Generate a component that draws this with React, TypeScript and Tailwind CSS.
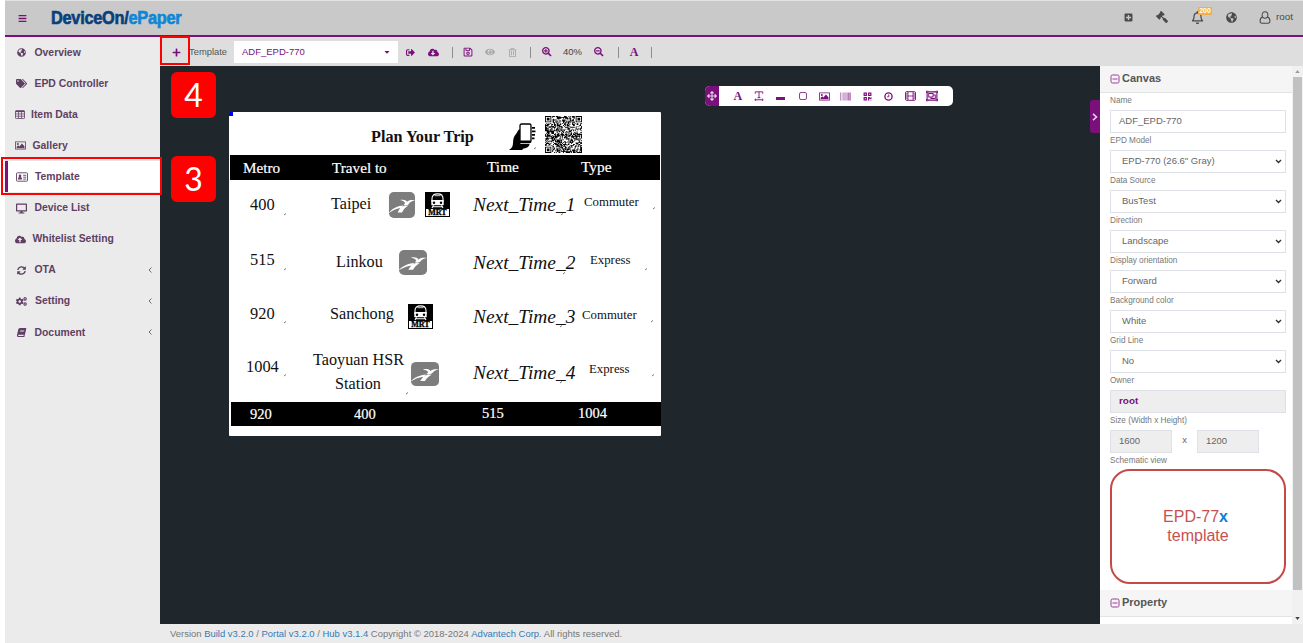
import React from "react";
import {
  FaBars, FaTags, FaDesktop, FaCloudUploadAlt, FaCogs, FaBook, FaSignOutAlt,
  FaCloudDownloadAlt, FaRegSave, FaEye, FaRegTrashAlt, FaSearchPlus, FaSearchMinus,
  FaPlus, FaPlusSquare, FaGavel, FaRegBell, FaGlobeAmericas, FaCaretDown,
  FaArrowsAlt, FaBarcode, FaQrcode, FaRegObjectGroup, FaSyncAlt,
} from "react-icons/fa";

function Picture({ className }: { className?: string }) {
  return (
    <svg viewBox="0 0 12 10" className={className} fill="currentColor">
      <path fillRule="evenodd" d="M0 .5h12v9H0zM.9 1.4v7.2h10.2V1.4z" />
      <circle cx="3" cy="3.3" r="1.1" />
      <path d="M1.7 8V6.400l1.800-1.600 1.200 1.200L7.600 2.700l2.800 3v2.300z" />
    </svg>
  );
}

function Table() {
  return (
    <svg viewBox="0 0 11 10" className="w-[10px] h-[9px]" fill="none" stroke="currentColor">
      <rect x=".5" y=".8" width="10" height="8.700" rx=".8" strokeWidth=".9" />
      <path d="M.5 1.500h10" strokeWidth="1.600" />
      <path d="M.5 4.400h10M.5 6.900h10M3.900 1.500v8M7.200 1.500v8" strokeWidth=".8" />
    </svg>
  );
}

function IdCard() {
  return (
    <svg viewBox="0 0 12 10" className="w-[12px] h-[10px]" fill="none" stroke="currentColor">
      <rect x=".5" y=".8" width="11" height="8.400" rx=".8" strokeWidth=".9" />
      <circle cx="4" cy="3.900" r="1.300" fill="currentColor" stroke="none" />
      <path d="M1.900 7.600c0-1.700.7-2.500 2.100-2.500s2.100.8 2.100 2.500z" fill="currentColor" stroke="none" />
      <path d="M7.200 3.300h3M7.200 5.200h3M7.200 7.100h3" strokeWidth=".9" />
    </svg>
  );
}

function LetterA({ className }: { className: string }) {
  return <span className={`font-['Liberation_Serif',serif] font-bold leading-none ${className}`}>A</span>;
}

function TextTool() {
  return (
    <svg viewBox="0 0 12 12" className="w-[10px] h-[10px]" fill="none" stroke="currentColor">
      <path d="M1.5 3.2V1h9v2.2M6 1v7M4.3 8h3.4M1 10.5h10M2.3 9.3 1 10.5l1.3 1.2M9.7 9.3l1.3 1.2-1.3 1.2" strokeWidth="1.1" />
    </svg>
  );
}

function Clock() {
  return (
    <svg viewBox="0 0 10 10" className="size-[9px]" fill="none" stroke="currentColor">
      <circle cx="5" cy="5" r="4" strokeWidth="1.500" />
      <path d="M5.300 2.700v2.600H3.500" strokeWidth="1" />
    </svg>
  );
}

function Film() {
  return (
    <svg viewBox="0 0 12 11" className="w-[11px] h-[10px]" fill="none" stroke="currentColor">
      <rect x=".6" y=".8" width="10.8" height="9.4" rx=".8" strokeWidth="1.1" />
      <path d="M3.2 1v9M8.8 1v9M3.2 5.5h5.6M.8 3.2h2.4M.8 5.5h2.4M.8 7.8h2.4M8.8 3.2h2.4M8.8 5.5h2.4M8.8 7.8h2.4" strokeWidth=".9" />
    </svg>
  );
}

function Person() {
  return (
    <svg viewBox="0 0 12 14" className="h-[13px] w-[12px]" fill="none" stroke="currentColor" strokeWidth="1.100">
      <ellipse cx="6" cy="4.300" rx="3.100" ry="3.500" />
      <path d="M3.400 6.400C1.500 7 .7 8.700.7 10.700c0 1.500.7 2.400 2 2.400h6.600c1.300 0 2-.9 2-2.400 0-2-.8-3.700-2.700-4.300" />
    </svg>
  );
}

const nav = [
  { label: "Overview", icon: <FaGlobeAmericas className="size-[9px]" />, pad: "pl-[12px] gap-[8.5px]" },
  { label: "EPD Controller", icon: <FaTags className="size-[11px]" />, pad: "pl-[11px] gap-[7.5px]" },
  { label: "Item Data", icon: <Table />, pad: "pl-[10px] gap-[6px]" },
  { label: "Gallery", icon: <Picture className="w-[11px] h-[9px]" />, pad: "pl-[10px] gap-[6.5px]" },
  { label: "Template", icon: <IdCard />, pad: "pl-[8px] gap-[7px]", active: true },
  { label: "Device List", icon: <FaDesktop className="size-[11px]" />, pad: "pl-[11px] gap-[7.5px]" },
  { label: "Whitelist Setting", icon: <FaCloudUploadAlt className="size-[11px]" />, pad: "pl-[10px] gap-[6.5px]" },
  { label: "OTA", icon: <FaSyncAlt className="size-[9px]" />, pad: "pl-[12px] gap-[8.5px]", more: true },
  { label: "Setting", icon: <FaCogs className="size-[11px]" />, pad: "pl-[11px] gap-[8px]", more: true },
  { label: "Document", icon: <FaBook className="size-[9px] -skew-x-12" />, pad: "pl-[12px] gap-[8.5px]", more: true },
];

function Sidebar() {
  return (
    <nav className="w-[155px] shrink-0 bg-[#ebebeb] text-[#5f3f63]">
      {nav.map((n) => (
        <div
          key={n.label}
          className={`flex h-[31.1px] items-center text-[10.4px] font-bold ${n.pad} ${n.active ? "bg-white border-l-[3px] border-[#7b0f7b]" : ""}`}
        >
          {n.icon}
          <span className="whitespace-nowrap">{n.label}</span>
          {n.more && (
            <svg viewBox="0 0 4 6" className="ml-auto mr-[8px] w-[4px] h-[6px]" fill="none" stroke="currentColor" strokeWidth=".8">
              <path d="M3.5.5 1 3l2.5 2.5" />
            </svg>
          )}
        </div>
      ))}
    </nav>
  );
}

function Header() {
  return (
    <header className="flex h-[37px] items-center bg-[#c9c9c9] border-t border-t-[#e2e2e2] border-b-2 border-b-[#7b0f7b] text-[#4a4a4a]">
      <FaBars className="ml-[12.5px] size-[9px] shrink-0 text-[#7b0f7b]" />
      <div className="ml-[24px] w-[135px] pt-[1px]">
        <span className="inline-block origin-left scale-x-[0.935] whitespace-nowrap text-[17.5px] leading-[20px] font-bold tracking-[-0.3px] text-[#08407c] [-webkit-text-stroke:0.6px]">
          DeviceOn/<span className="text-[#0f86d6]">ePaper</span>
        </span>
      </div>
      <div className="ml-auto flex items-center pb-[1px]">
        <FaPlusSquare className="size-[9px] mr-[23px]" />
        <FaGavel className="size-[12px] mr-[23px] -scale-x-100" />
        <div className="relative mr-[22px]">
          <FaRegBell className="size-[13px]" />
          <span className="absolute left-[7px] -top-[4px] h-[8px] w-[14px] rounded-[1px] bg-[#f0ad4e] text-center text-[7px] leading-[8px] font-bold text-white">200</span>
        </div>
        <FaGlobeAmericas className="size-[11px] mr-[22px]" />
        <Person />
        <span className="ml-[5px] mr-[10px] text-[9.9px]">root</span>
      </div>
    </header>
  );
}

function Bar() {
  return <span className="h-[11px] w-px bg-[#8d8d8d]" />;
}

function Cell({ w, children }: { w: string; children: React.ReactNode }) {
  return <span className={`flex shrink-0 items-center justify-center ${w}`}>{children}</span>;
}

function Toolbar() {
  return (
    <div className="flex h-[29px] shrink-0 items-center border-t border-[#ebe0eb] bg-[#dedede] text-[#7b0f7b]">
      <Cell w="w-[32px]"><FaPlus className="size-[9px]" /></Cell>
      <span className="-ml-[3px] w-[42px] text-[9.4px] text-[#555]">Template</span>
      <div className="ml-[3px] flex h-[22px] w-[164px] items-center justify-between bg-white pl-[8px] pr-[7px] text-[9.5px]">
        ADF_EPD-770
        <FaCaretDown className="size-[8px]" />
      </div>
      <span className="w-px" />
      <Cell w="w-[22px]"><FaSignOutAlt className="size-[9px]" /></Cell>
      <Cell w="w-[24px]"><FaCloudDownloadAlt className="size-[11px]" /></Cell>
      <Cell w="w-[14px]"><Bar /></Cell>
      <Cell w="w-[18px]"><FaRegSave className="size-[10px]" /></Cell>
      <Cell w="w-[26px]"><FaEye className="size-[10px] text-[#a5a5a5]" /></Cell>
      <Cell w="w-[18px]"><FaRegTrashAlt className="size-[9px] text-[#a5a5a5]" /></Cell>
      <Cell w="w-[18px]"><Bar /></Cell>
      <Cell w="w-[16px]"><FaSearchPlus className="size-[9.5px]" /></Cell>
      <Cell w="w-[35px]"><span className="text-[9.5px] text-[#444]">40%</span></Cell>
      <Cell w="w-[18px]"><FaSearchMinus className="size-[9.5px]" /></Cell>
      <Cell w="w-[20px]"><Bar /></Cell>
      <Cell w="w-[12px]"><LetterA className="text-[12px]" /></Cell>
      <Cell w="w-[22px]"><Bar /></Cell>
    </div>
  );
}

const paletteIcons = [
  <LetterA className="text-[12px]" />,
  <TextTool />,
  <span className="mt-[4px] h-[3px] w-[9px] bg-current" />,
  <span className="size-[8px] rounded-[2px] border border-current opacity-80" />,
  <Picture className="w-[11px] h-[9px]" />,
  <FaBarcode className="size-[11px] opacity-80" />,
  <FaQrcode className="size-[9px]" />,
  <Clock />,
  <Film />,
  <FaRegObjectGroup className="size-[12px]" />,
];

function Palette() {
  return (
    <div className="absolute left-[545px] top-[20px] flex h-[20px] w-[248px] overflow-hidden rounded-[5px] bg-white text-[#7b0f7b]">
      <span className="flex w-[14px] items-center justify-center bg-[#7b0f7b] text-[#e6cfe6]">
        <FaArrowsAlt className="size-[10px]" />
      </span>
      <div className="ml-[8px] flex items-center">
        {paletteIcons.map((icon, i) => (
          <Cell key={i} w="w-[21.6px]">{icon}</Cell>
        ))}
      </div>
    </div>
  );
}

const qrSize = 41;
function qrPath() {
  let seed = 77;
  let d = "";
  const inFinder = (x: number, y: number) =>
    (x < 8 && y < 8) || (x > qrSize - 9 && y < 8) || (x < 8 && y > qrSize - 9);
  for (let y = 0; y < qrSize; y++) {
    for (let x = 0; x < qrSize; x++) {
      seed = (seed * 1103515245 + 12345) % 2147483648;
      if (!inFinder(x, y) && seed / 2147483648 > 0.46) d += `M${x} ${y}h1v1h-1z`;
    }
  }
  for (const [x, y] of [[0, 0], [qrSize - 7, 0], [0, qrSize - 7]]) {
    d += `M${x} ${y}h7v7h-7zM${x + 1} ${y + 1}v5h5v-5zM${x + 2} ${y + 2}h3v3h-3z`;
  }
  return d;
}

function Rail({ className }: { className: string }) {
  return (
    <svg viewBox="0 0 28 26" preserveAspectRatio="none" className={`absolute ${className}`}>
      <rect x="1" width="27" height="26" rx="5" fill="#7d7d7d" />
      <path d="M0 21.5C4 17 9 14 16 13.500L13 16C8 16.500 4 19 0 21.500zM10 20.500c1.500-3.500 4-6 7.500-7l3.500.3c-3 1.700-5 3.700-6.500 6.700z" fill="#fff" />
      <path d="M12.500 8c3.500-.8 6-.3 7.300 1.800C21.500 8 24 7.600 28 8.200c-3.500.8-5.200 1.800-6.200 3.500-1.200 1.700-3.800 1.900-6 .9 1.200-.5 1.700-.9 1.900-1.400C17 9.500 15.500 8.500 12.500 8z" fill="#fff" />
    </svg>
  );
}

function Mrt({ className }: { className: string }) {
  return (
    <div className={`absolute flex h-[25px] w-[25px] flex-col bg-black p-px ${className}`}>
      <svg viewBox="0 0 23 16" className="h-[16px] w-[23px]">
        <path d="M6 8.500V5.500C6 2.200 8.200.9 11.500.9S17 2.200 17 5.500v3z" fill="none" stroke="#fff" strokeWidth="1.100" />
        <path d="M5.300 7h12.400v5.200H5.300z" fill="#fff" />
        <path d="M7.500 12.200 6 15M15.500 12.200 17 15M7 13.700h9" stroke="#fff" strokeWidth="1.100" />
        <path d="M8.500 2.700h6" stroke="#fff" strokeWidth=".8" />
        <circle cx="8" cy="9.700" r="1.200" />
        <circle cx="15" cy="9.700" r="1.200" />
      </svg>
      <span className="h-[7px] bg-white text-center font-['Liberation_Serif',serif] text-[8px] leading-[7.5px] font-bold text-black [-webkit-text-stroke:0.3px]">MRT</span>
    </div>
  );
}

const serif = "font-['Liberation_Serif',serif]";

const labels = [
  { t: "400", c: "left-[21px] top-[82.5px] text-[16.4px]" },
  { t: "515", c: "left-[21px] top-[138px] text-[16.4px]" },
  { t: "920", c: "left-[21px] top-[192px] text-[16.4px]" },
  { t: "1004", c: "left-[17px] top-[245px] text-[16.4px]" },
  { t: "Taipei", c: "left-[102px] top-[82px] text-[16.2px]" },
  { t: "Linkou", c: "left-[107px] top-[140px] text-[16.2px]" },
  { t: "Sanchong", c: "left-[101px] top-[192px] text-[16.2px]" },
  { t: "Taoyuan HSR", c: "left-[84px] top-[238px] text-[16.2px]" },
  { t: "Station", c: "left-[106px] top-[262px] text-[16.2px]" },
  { t: "Commuter", c: "left-[355px] top-[80px] text-[12.8px]" },
  { t: "Express", c: "left-[361px] top-[138px] text-[12.8px]" },
  { t: "Commuter", c: "left-[353px] top-[193px] text-[12.8px]" },
  { t: "Express", c: "left-[360px] top-[247px] text-[12.8px]" },
  { t: "Next_Time_1", c: "left-[244px] top-[83px] text-[19.4px] italic" },
  { t: "Next_Time_2", c: "left-[244px] top-[141px] text-[19.4px] italic" },
  { t: "Next_Time_3", c: "left-[244px] top-[195px] text-[19.4px] italic" },
  { t: "Next_Time_4", c: "left-[244px] top-[251px] text-[19.4px] italic" },
  { t: "Plan Your Trip", c: "left-[142px] top-[15px] text-[16.2px] font-bold" },
];

const bandLabels = [
  { t: "Metro", c: "left-[14px] top-[45.5px] text-[15.2px]" },
  { t: "Travel to", c: "left-[103px] top-[45.5px] text-[15.2px]" },
  { t: "Time", c: "left-[258px] top-[45px] text-[15.4px]" },
  { t: "Type", c: "left-[352px] top-[45px] text-[15.4px]" },
  { t: "920", c: "left-[21px] top-[292px] text-[14.5px]" },
  { t: "400", c: "left-[125px] top-[292px] text-[14.5px]" },
  { t: "515", c: "left-[253px] top-[291px] text-[14.5px]" },
  { t: "1004", c: "left-[349px] top-[291px] text-[14.5px]" },
];

const ticks = [[55, 102], [55, 157], [55, 210], [55, 263], [177, 281], [424, 96], [416, 157], [422, 209], [423, 263], [332, 102], [334, 161], [331, 214], [331, 270], [305, 36]];

function Sheet() {
  return (
    <div className={`absolute left-[69px] top-[46px] h-[324px] w-[432px] rounded-[1px] bg-white text-[#111] ${serif}`}>
      <span className="absolute left-0 top-0 size-[4px] bg-[#0000ff]" />
      <div className="absolute left-[1px] top-[43px] h-[25px] w-[430px] bg-black" />
      <div className="absolute left-[2px] top-[290px] h-[24px] w-[430px] bg-black" />
      {labels.map((l, i) => (
        <span key={i} className={`absolute whitespace-nowrap leading-[20px] ${l.c}`}>{l.t}</span>
      ))}
      {bandLabels.map((l, i) => (
        <span key={i} className={`absolute whitespace-nowrap leading-[20px] text-white [-webkit-text-stroke:0.2px] ${l.c}`}>{l.t}</span>
      ))}
      <svg viewBox="0 0 28 28" className="absolute left-[280px] top-[11px] h-[28px] w-[28px]">
        <path d="M0 27c3-2 4-4 4-7 0-4 1-7 3-9 1-1 2-4 3-4.500l1.500 0V21h9c0 3-4 4.500-6 4.500L13 27z" />
        <rect x="11" y="1" width="11" height="18.500" rx="1.500" fill="#fff" stroke="#000" strokeWidth="1.300" />
        <path d="M11 17.500h11v1.500q0 1-1 1h-9q-1 0-1-1zM23 4h3v1.700h-3zM23 7.500h3.500v1.700H23zM23 11h3v1.700h-3zM23 14.500h2.500v1.700H23z" />
      </svg>
      <svg viewBox="0 0 41 41" className="absolute left-[316px] top-[4px] size-[37px]">
        <path d={qrPath()} fillRule="evenodd" />
      </svg>
      <Rail className="left-[159px] top-[80px] h-[26px] w-[27px]" />
      <Rail className="left-[169px] top-[138px] h-[25px] w-[29px]" />
      <Rail className="left-[181px] top-[250px] h-[24px] w-[29px]" />
      <Mrt className="left-[196px] top-[80px]" />
      <Mrt className="left-[179px] top-[192px]" />
      <svg viewBox="0 0 432 324" className="absolute inset-0" stroke="#777" strokeWidth="1">
        {ticks.map(([x, y]) => <path key={`${x}-${y}`} d={`M${x} ${y + 1}l2-1.500`} />)}
      </svg>
    </div>
  );
}

function Section({ title }: { title: string }) {
  return (
    <div className="flex h-[27px] shrink-0 items-center border-b border-[#e4e4e4] bg-[#f5f5f5] pb-[1px] pl-[10px] text-[11px] font-bold text-[#555]">
      <svg viewBox="0 0 10 10" className="mr-[2px] size-[10px]" fill="none" stroke="#9c3f9c">
        <rect x="1" y="1" width="8" height="8" rx="1.500" />
        <path d="M2.500 5h5" />
      </svg>
      {title}
    </div>
  );
}

function Field({ label, children }: { label: string; children: React.ReactNode }) {
  return (
    <div className="h-[40px] shrink-0">
      <div className="h-[16.5px] text-[8.2px] leading-[16px] text-[#777]">{label}</div>
      {children}
    </div>
  );
}

function Select({ value }: { value: string }) {
  return (
    <div className="flex h-[23px] items-center justify-between border border-[#dfe1e8] bg-white pl-[11px] pr-[3px] text-[9.5px] text-[#666]">
      {value}
      <svg viewBox="0 0 7 5" className="h-[5px] w-[7px]" fill="none" stroke="#333" strokeWidth="1.400">
        <path d="M1 1l2.500 2.500L6 1" />
      </svg>
    </div>
  );
}

const selects = [
  ["EPD Model", 'EPD-770 (26.6" Gray)'],
  ["Data Source", "BusTest"],
  ["Direction", "Landscape"],
  ["Display orientation", "Forward"],
  ["Background color", "White"],
  ["Grid Line", "No"],
];

function Panel() {
  const size = "flex h-[23px] w-[62px] items-center border border-[#dfe1e8] bg-[#eee] pl-[8px]";
  return (
    <aside className="flex w-[203px] shrink-0 bg-white">
      <div className="flex w-[192px] flex-col overflow-hidden">
        <Section title="Canvas" />
        <div className="flex h-[497px] shrink-0 flex-col pl-[10px] pr-[6px]">
          <Field label="Name">
            <div className="flex h-[23px] items-center border border-[#dfe1e8] pl-[8px] text-[9.5px] text-[#666]">ADF_EPD-770</div>
          </Field>
          {selects.map(([label, value]) => (
            <Field key={label} label={label}><Select value={value} /></Field>
          ))}
          <Field label="Owner">
            <div className="flex h-[23px] items-center border border-[#dfe1e8] bg-[#eee] pl-[8px] text-[9.9px] font-bold text-[#7b0f7b]">root</div>
          </Field>
          <Field label="Size (Width x Height)">
            <div className="flex text-[9.5px] text-[#666]">
              <span className={size}>1600</span>
              <span className="w-[25px] pt-[3px] text-center">x</span>
              <span className={size}>1200</span>
            </div>
          </Field>
          <div className="h-[16px] text-[8.2px] leading-[16px] text-[#777]">Schematic view</div>
          <div className="flex h-[115px] flex-col items-center justify-center rounded-[20px] border-2 border-[#c44a4a] pr-[5px] pb-[1px] text-[16px] leading-[19px] text-[#c75151]">
            <span>EPD-77<b className="text-[#0f7fd0]">x</b></span>
            <span className="pl-[5px]">template</span>
          </div>
        </div>
        <Section title="Property" />
      </div>
      <div className="flex w-[11px] flex-col items-center justify-between bg-[#f1f1f1]">
        <svg viewBox="0 0 6 4" className="mt-[4px] h-[3px] w-[5px]"><path d="M0 4l3-4 3 4z" fill="#999" /></svg>
        <span className="mt-[4px] w-[9px] flex-1 bg-[#c1c1c1]" />
        <svg viewBox="0 0 6 4" className="mt-[27px] mb-[4px] h-[3px] w-[5px]"><path d="M0 0l3 4 3-4z" fill="#444" /></svg>
      </div>
    </aside>
  );
}

function Callout({ n, className }: { n: string; className: string }) {
  return (
    <div className={`absolute flex h-[46px] w-[45px] items-center justify-center rounded-[6px] bg-[#ff0000] font-['Lato',sans-serif] text-[32px] text-white ${className}`}>
      {n}
    </div>
  );
}

export default function App() {
  return (
    <div className="relative h-[643px] w-[1303px] overflow-hidden bg-white pl-[5px] font-['Liberation_Sans',Arial,sans-serif]">
      <Header />
      <div className="flex h-[606px]">
        <Sidebar />
        <main className="flex min-w-0 flex-1 flex-col">
          <Toolbar />
          <div className="flex h-[558px] shrink-0">
            <div className="relative flex-1 bg-[#1f272d]">
              <Sheet />
              <Palette />
              <span className="absolute right-0 top-[34px] flex h-[33px] w-[10px] items-center justify-center rounded-l-[3px] bg-[#7b0f7b]">
                <svg viewBox="0 0 6 8" className="h-[8px] w-[6px]" fill="none" stroke="#e6cfe6" strokeWidth="1.600">
                  <path d="M1 .8 4.500 4 1 7.200" />
                </svg>
              </span>
            </div>
            <Panel />
          </div>
          <footer className="flex h-[19px] items-center whitespace-pre bg-[#ebebeb] pl-[10px] pt-[2px] text-[9.46px] text-[#777]">
            Version <span className="text-[#337ab7]">Build v3.2.0</span> / <span className="text-[#337ab7]">Portal v3.2.0</span> / <span className="text-[#337ab7]">Hub v3.1.4</span> Copyright © 2018-2024 <span className="text-[#337ab7]">Advantech Corp</span>. All rights reserved.
          </footer>
        </main>
      </div>
      <div className="absolute left-[1px] top-[157px] h-[38px] w-[161px] border-2 border-[#ff0000]" />
      <div className="absolute left-[160px] top-[36px] h-[29px] w-[30px] border-2 border-[#ff0000]" />
      <Callout n="4" className="left-[171px] top-[72px]" />
      <Callout n="3" className="left-[171px] top-[156px]" />
    </div>
  );
}
